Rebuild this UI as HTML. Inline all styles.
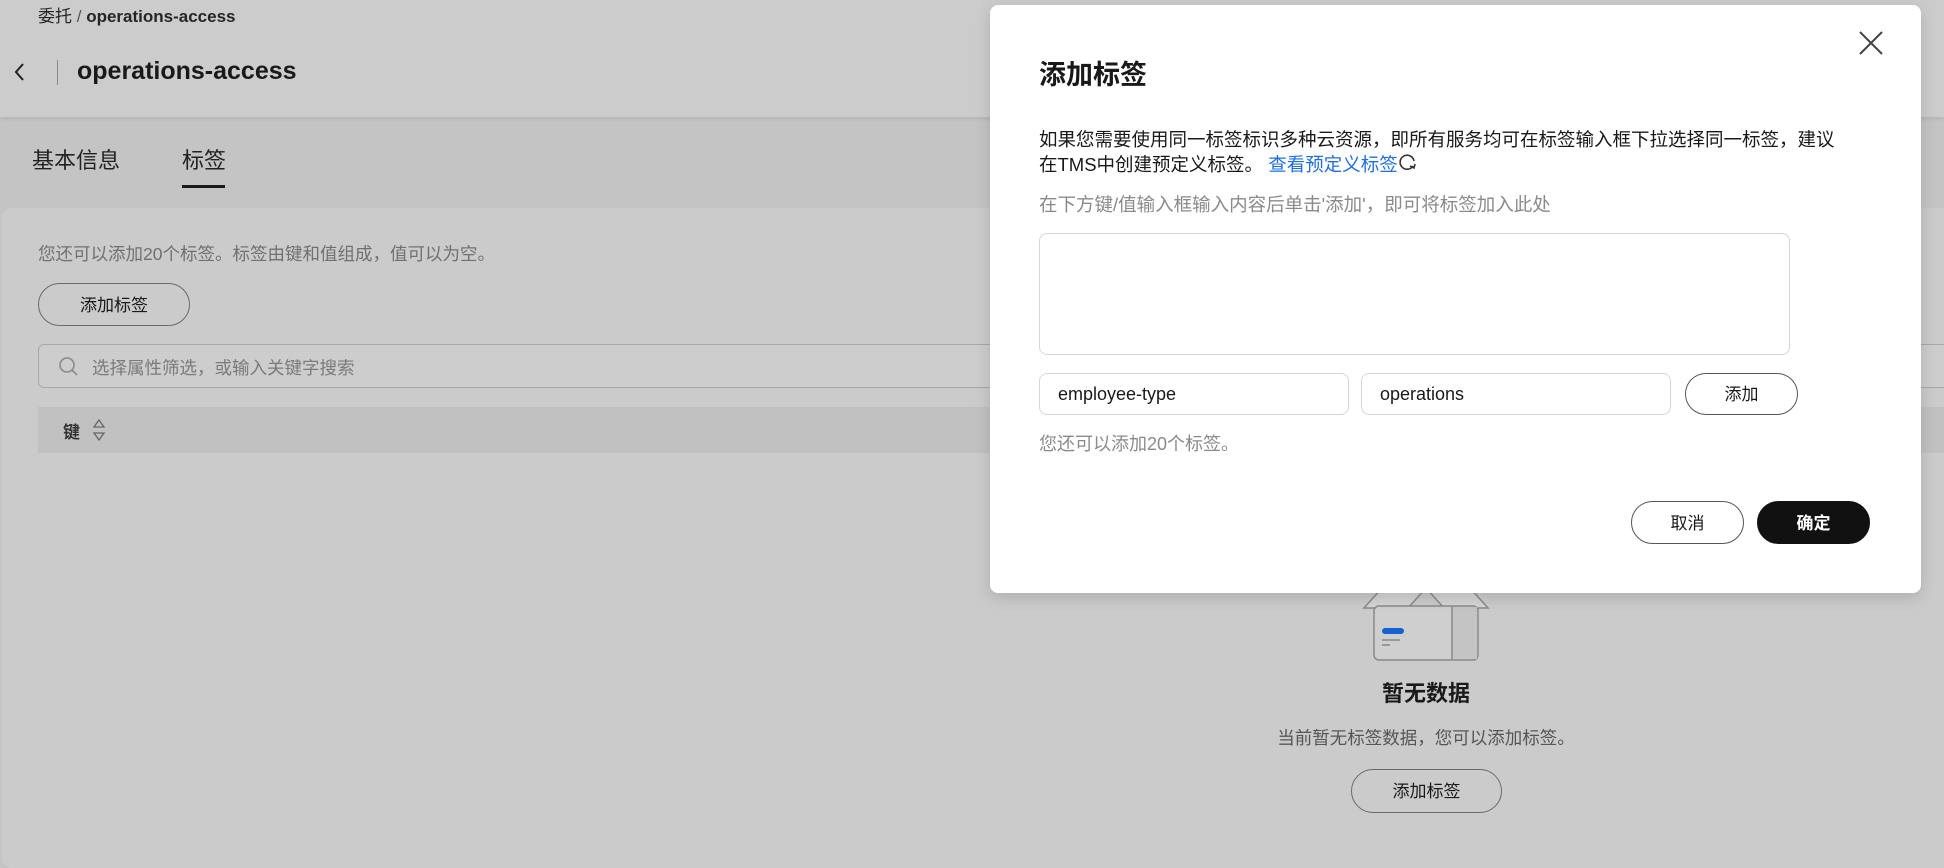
<!DOCTYPE html>
<html><head><meta charset="utf-8"><style>
*{box-sizing:border-box;margin:0;padding:0}
body{width:1944px;height:850px;overflow:hidden;position:relative;background:#c4c4c4;font-family:"Liberation Sans","Noto Sans CJK SC",sans-serif;color:#191919}
.abs{position:absolute}
.hdr{left:0;top:0;width:1944px;height:117px;background:#cccccc;box-shadow:0 2px 4px rgba(0,0,0,.08)}
.card{left:2px;top:208px;width:1960px;height:660px;background:#cbcbcb;border-radius:10px}
.pill{border:1.5px solid #6a6a6a;border-radius:22px;display:flex;align-items:center;justify-content:center;font-size:17px;padding-bottom:3px}
.modal{left:990px;top:5px;width:931px;height:588px;background:#fff;border-radius:8px;box-shadow:0 4px 16px rgba(0,0,0,.15)}
.inp{border:1.5px solid #d6d6d6;border-radius:8px;font-size:18px;padding-left:18px;display:flex;align-items:center}
</style></head><body>
<div class="abs hdr"></div>
<div class="abs" style="left:38px;top:2px;font-size:17px;color:#252525">委托 <span style="color:#555">/</span> <b>operations-access</b></div>
<svg class="abs" style="left:12px;top:61px" width="16" height="22"><path d="M11 3 L4 11 L11 19" fill="none" stroke="#222" stroke-width="2"/></svg>
<div class="abs" style="left:57px;top:60px;width:1px;height:25px;background:#888"></div>
<div class="abs" style="left:77px;top:57px;font-size:25px;font-weight:bold">operations-access</div>
<div class="abs" style="left:32px;top:143px;font-size:22px;color:#222">基本信息</div>
<div class="abs" style="left:182px;top:143px;font-size:22px;color:#222">标签</div>
<div class="abs" style="left:182px;top:185px;width:43px;height:3px;background:#1a1a1a"></div>
<div class="abs card"></div>
<div class="abs" style="left:38px;top:241px;font-size:17.5px;color:#707070">您还可以添加20个标签。标签由键和值组成，值可以为空。</div>
<div class="abs pill" style="left:38px;top:283px;width:152px;height:43px">添加标签</div>
<div class="abs" style="left:38px;top:344px;width:1920px;height:44px;border:1.5px solid #a8a8a8;border-radius:6px;background:#cdcdcd"></div>
<svg class="abs" style="left:58px;top:356px" width="22" height="22"><circle cx="9" cy="9" r="7" fill="none" stroke="#8a8a8a" stroke-width="1.6"/><path d="M14 14 L19 19" stroke="#8a8a8a" stroke-width="1.6"/></svg>
<div class="abs" style="left:92px;top:355px;font-size:17.5px;color:#7a7a7a">选择属性筛选，或输入关键字搜索</div>
<div class="abs" style="left:38px;top:407px;width:1920px;height:46px;background:#c1c1c1"></div>
<div class="abs" style="left:63px;top:418px;font-size:17px;font-weight:bold;color:#333">键</div>
<svg class="abs" style="left:92px;top:418px" width="14" height="24"><path d="M7 2 L12 9 H2 Z M7 22 L12 15 H2 Z" fill="none" stroke="#666" stroke-width="1.3"/></svg>
<!-- empty state -->
<svg class="abs" style="left:1362px;top:548px" width="128" height="116"><path d="M2 60 L20 40 H64 L46 60 Z M126 60 L108 40 H64 L82 60 Z" fill="#d4d4d4" stroke="#8a8a8a" stroke-width="1.5"/><rect x="12" y="58" width="104" height="54" rx="5" fill="#cfcfcf" stroke="#8a8a8a" stroke-width="1.5"/><rect x="90" y="59" width="25" height="52" fill="#c4c4c4"/><path d="M90 58 V112" stroke="#8a8a8a" stroke-width="1.5"/><rect x="20" y="80" width="22" height="6" rx="3" fill="#1462d0"/><path d="M20 92 H38 M20 97 H28" stroke="#888" stroke-width="1.5"/></svg>
<div class="abs" style="left:1320px;top:676px;width:212px;text-align:center;font-size:22px;font-weight:bold">暂无数据</div>
<div class="abs" style="left:1226px;top:725px;width:400px;text-align:center;font-size:17.5px;color:#555">当前暂无标签数据，您可以添加标签。</div>
<div class="abs pill" style="left:1351px;top:769px;width:151px;height:44px">添加标签</div>
<!-- modal -->
<div class="abs modal"></div>
<svg class="abs" style="left:1858px;top:30px" width="26" height="26"><path d="M2 2 L24 24 M24 2 L2 24" stroke="#444" stroke-width="2"/></svg>
<div class="abs" style="left:1039px;top:53px;font-size:27px;font-weight:bold">添加标签</div>
<div class="abs" style="left:1039px;top:127px;font-size:18.5px;line-height:25px;color:#191919;width:820px">如果您需要使用同一标签标识多种云资源，即所有服务均可在标签输入框下拉选择同一标签，建议<br>在TMS中创建预定义标签。 <span style="color:#1f6fdf">查看预定义标签</span><svg width="20" height="20" style="vertical-align:-2px"><path d="M15 13 A7 7 0 1 1 16 8" fill="none" stroke="#333" stroke-width="1.6"/><path d="M12 13 L16 15 L17 11" fill="none" stroke="#333" stroke-width="1.6"/></svg></div>
<div class="abs" style="left:1039px;top:191px;font-size:18.5px;color:#8a8a8a">在下方键/值输入框输入内容后单击'添加'，即可将标签加入此处</div>
<div class="abs" style="left:1039px;top:233px;width:751px;height:122px;border:1.5px solid #d6d6d6;border-radius:8px"></div>
<div class="abs inp" style="left:1039px;top:373px;width:310px;height:42px">employee-type</div>
<div class="abs inp" style="left:1361px;top:373px;width:310px;height:42px">operations</div>
<div class="abs pill" style="left:1685px;top:373px;width:113px;height:42px;border-color:#555">添加</div>
<div class="abs" style="left:1039px;top:430px;font-size:18px;color:#8a8a8a">您还可以添加20个标签。</div>
<div class="abs pill" style="left:1631px;top:501px;width:113px;height:43px;border-color:#555">取消</div>
<div class="abs pill" style="left:1757px;top:501px;width:113px;height:43px;background:#111;border-color:#111;color:#fff;font-weight:bold">确定</div>
</body></html>
